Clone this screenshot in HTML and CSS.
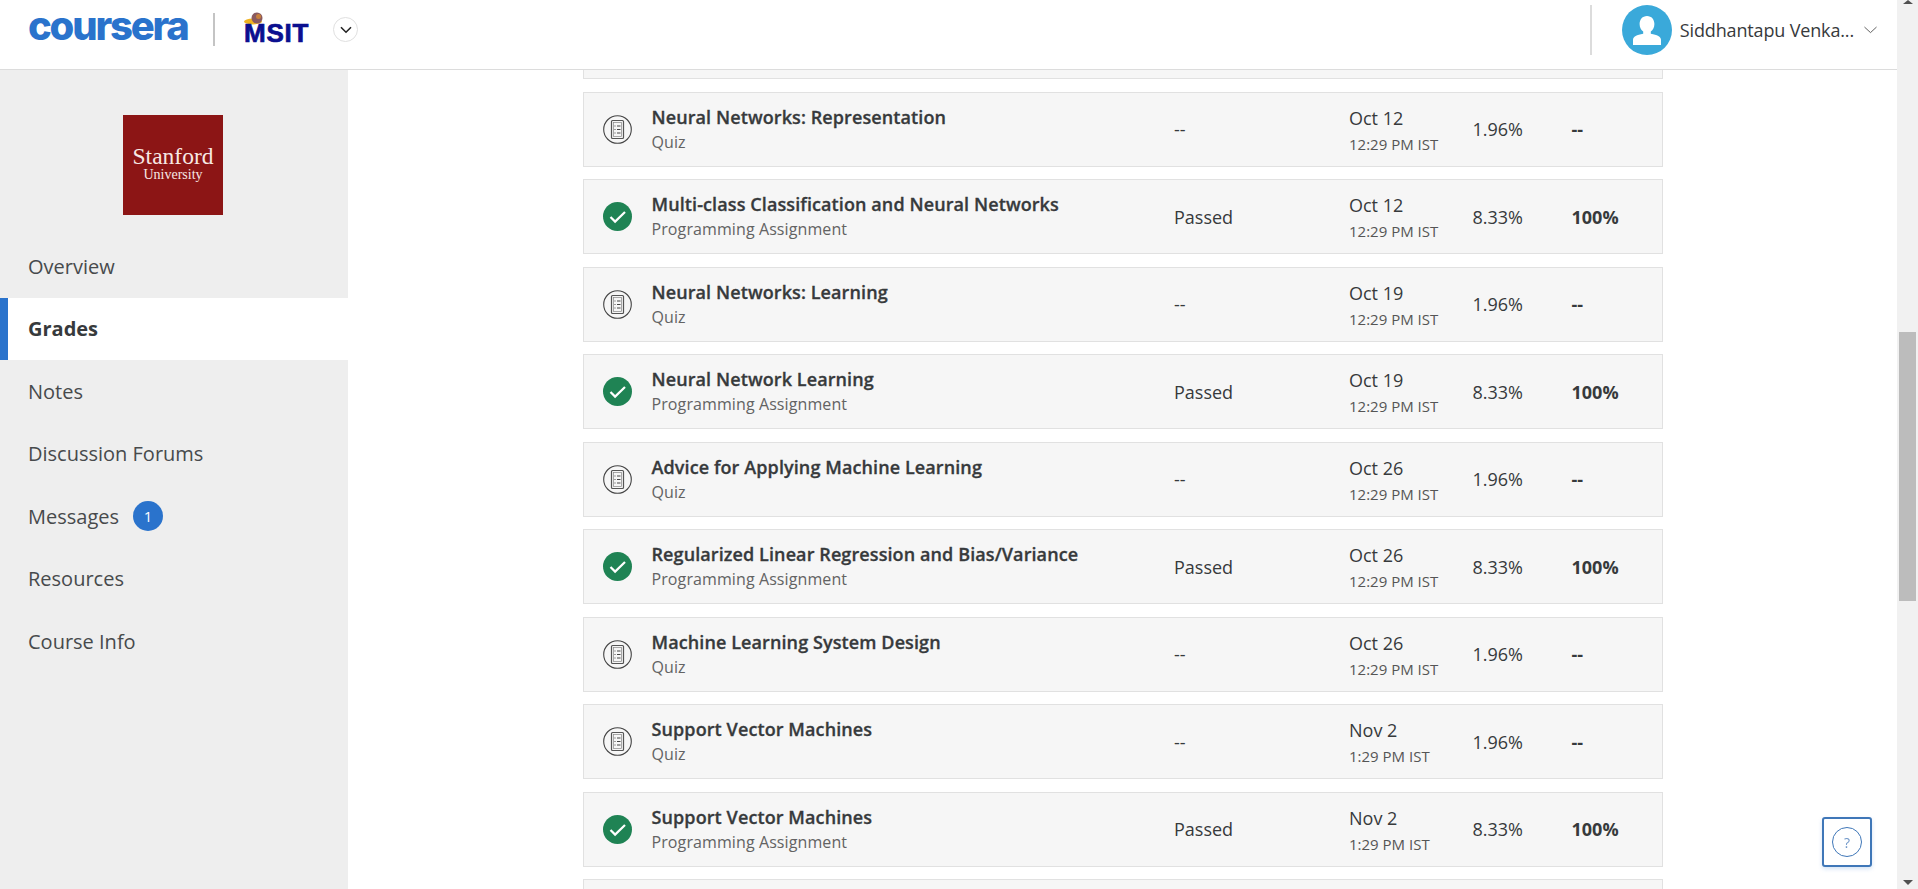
FILE: index.html
```html
<!DOCTYPE html>
<html lang="en">
<head>
  <meta charset="UTF-8" />
  <title>Grades | Coursera</title>
  <link rel="stylesheet" href="styles.css">
</head>
<body>

  <svg class="defs" width="0" height="0">
    <symbol id="quiz" viewBox="0 0 29 29">
      <circle cx="14.5" cy="14.5" r="13.8" fill="none" stroke="#444" stroke-width="1.1"/>
      <rect x="8.500" y="5.500" width="12" height="18" rx="1" fill="none" stroke="#555" stroke-width="1.2"/>
      <rect x="10.500" y="7.500" width="8" height="14" fill="none" stroke="#888" stroke-width="0.7"/>
      <path d="M11.500 11h1M14 11h3.500M11.500 14.500h1M14 14.500h3.500M11.500 18h1M14 18h3.500" fill="none" stroke="#444" stroke-width="1.1"/>
    </symbol>
    <symbol id="passed" viewBox="0 0 29 29">
      <circle cx="14.5" cy="14.5" r="14.5" fill="#1f8354"/>
      <path d="M7.500 15l4.600 4.600L22 10" fill="none" stroke="#fff" stroke-width="2.2"/>
    </symbol>
  </svg>

  <div class="page">
    <header class="topbar">
      <div class="brand">
        <span class="coursera-logo">coursera</span>
        <span class="brand-divider"></span>
        <div class="msit-logo">
          <svg class="msit-sun" width="22" height="13" viewBox="0 0 22 13">
            <ellipse cx="9" cy="9.5" rx="9" ry="3" fill="#f0b323"/>
            <circle cx="13" cy="6" r="5.5" fill="#8a5a5f"/>
            <circle cx="14.5" cy="4.5" r="2.5" fill="#c9803a"/>
          </svg>
          <span class="msit-text">MSIT</span>
        </div>
        <button class="brand-toggle">
          <svg width="12" height="8" viewBox="0 0 12 8"><path d="M1 1.2l5 5 5-5" fill="none" stroke="#222" stroke-width="1.6"/></svg>
        </button>
      </div>
      <div class="account">
        <span class="account-divider"></span>
        <svg class="avatar" width="50" height="50" viewBox="0 0 50 50">
          <circle cx="25" cy="25" r="25" fill="#3aa9da"/>
          <path d="M25 11c-4.600 0-7.400 3.600-7.400 8 0 3.400 1.500 6 3.600 7.600v2.200c-6.400 1-10.200 3-10.200 6.200V40h28v-5c0-3.200-3.800-5.200-10.200-6.200v-2.200c2.100-1.600 3.600-4.200 3.600-7.600 0-4.400-2.800-8-7.400-8z" fill="#fff"/>
        </svg>
        <span class="account-name">Siddhantapu Venka...</span>
        <svg class="account-caret" width="13" height="8" viewBox="0 0 14 8"><path d="M.5.8L7 6.800 13.500.8" fill="none" stroke="#555" stroke-width="1"/></svg>
      </div>
    </header>

    <div class="content">
      <nav class="sidebar">
        <div class="course-logo">
          <span class="stanford">Stanford</span>
          <span class="university">University</span>
        </div>
        <a class="nav-item">Overview</a>
        <a class="nav-item active">Grades</a>
        <a class="nav-item">Notes</a>
        <a class="nav-item">Discussion Forums</a>
        <a class="nav-item">Messages <span class="badge">1</span></a>
        <a class="nav-item">Resources</a>
        <a class="nav-item">Course Info</a>
      </nav>

      <main class="grades">
        <div class="row row-cut"></div>

        <div class="row">
          <div class="item"><svg class="item-icon"><use href="#quiz"/></svg><div class="item-text"><div class="item-title">Neural Networks: Representation</div><div class="item-type">Quiz</div></div></div>
          <div class="status">--</div>
          <div class="due"><div>Oct 12</div><div class="due-time">12:29 PM IST</div></div>
          <div class="weight">1.96%</div>
          <div class="grade">--</div>
        </div>

        <div class="row">
          <div class="item"><svg class="item-icon"><use href="#passed"/></svg><div class="item-text"><div class="item-title">Multi-class Classification and Neural Networks</div><div class="item-type">Programming Assignment</div></div></div>
          <div class="status">Passed</div>
          <div class="due"><div>Oct 12</div><div class="due-time">12:29 PM IST</div></div>
          <div class="weight">8.33%</div>
          <div class="grade">100%</div>
        </div>

        <div class="row">
          <div class="item"><svg class="item-icon"><use href="#quiz"/></svg><div class="item-text"><div class="item-title">Neural Networks: Learning</div><div class="item-type">Quiz</div></div></div>
          <div class="status">--</div>
          <div class="due"><div>Oct 19</div><div class="due-time">12:29 PM IST</div></div>
          <div class="weight">1.96%</div>
          <div class="grade">--</div>
        </div>

        <div class="row">
          <div class="item"><svg class="item-icon"><use href="#passed"/></svg><div class="item-text"><div class="item-title">Neural Network Learning</div><div class="item-type">Programming Assignment</div></div></div>
          <div class="status">Passed</div>
          <div class="due"><div>Oct 19</div><div class="due-time">12:29 PM IST</div></div>
          <div class="weight">8.33%</div>
          <div class="grade">100%</div>
        </div>

        <div class="row">
          <div class="item"><svg class="item-icon"><use href="#quiz"/></svg><div class="item-text"><div class="item-title">Advice for Applying Machine Learning</div><div class="item-type">Quiz</div></div></div>
          <div class="status">--</div>
          <div class="due"><div>Oct 26</div><div class="due-time">12:29 PM IST</div></div>
          <div class="weight">1.96%</div>
          <div class="grade">--</div>
        </div>

        <div class="row">
          <div class="item"><svg class="item-icon"><use href="#passed"/></svg><div class="item-text"><div class="item-title">Regularized Linear Regression and Bias/Variance</div><div class="item-type">Programming Assignment</div></div></div>
          <div class="status">Passed</div>
          <div class="due"><div>Oct 26</div><div class="due-time">12:29 PM IST</div></div>
          <div class="weight">8.33%</div>
          <div class="grade">100%</div>
        </div>

        <div class="row">
          <div class="item"><svg class="item-icon"><use href="#quiz"/></svg><div class="item-text"><div class="item-title">Machine Learning System Design</div><div class="item-type">Quiz</div></div></div>
          <div class="status">--</div>
          <div class="due"><div>Oct 26</div><div class="due-time">12:29 PM IST</div></div>
          <div class="weight">1.96%</div>
          <div class="grade">--</div>
        </div>

        <div class="row">
          <div class="item"><svg class="item-icon"><use href="#quiz"/></svg><div class="item-text"><div class="item-title">Support Vector Machines</div><div class="item-type">Quiz</div></div></div>
          <div class="status">--</div>
          <div class="due"><div>Nov 2</div><div class="due-time">1:29 PM IST</div></div>
          <div class="weight">1.96%</div>
          <div class="grade">--</div>
        </div>

        <div class="row">
          <div class="item"><svg class="item-icon"><use href="#passed"/></svg><div class="item-text"><div class="item-title">Support Vector Machines</div><div class="item-type">Programming Assignment</div></div></div>
          <div class="status">Passed</div>
          <div class="due"><div>Nov 2</div><div class="due-time">1:29 PM IST</div></div>
          <div class="weight">8.33%</div>
          <div class="grade">100%</div>
        </div>

        <div class="row"></div>
      </main>
    </div>
  </div>

  <div class="scrollbar">
    <span class="arrow-up"></span>
    <span class="thumb"></span>
    <span class="arrow-down"></span>
  </div>

  <button class="help-btn"><span class="help-circle">?</span></button>

</body>
</html>
```

FILE: styles.css
```css
body {
  margin: 0;
  height: 889px;
  overflow: hidden;
  display: flex;
  background-color: #fff;
  color: #373a3c;
  font-family: 'Open Sans', sans-serif;
}

.defs {
  position: absolute;
}

.page {
  flex: 1;
  min-width: 0;
  display: flex;
  flex-direction: column;
}

/* top bar */
.topbar {
  height: 59px;
  padding-bottom: 10px;
  flex-shrink: 0;
  display: flex;
  justify-content: space-between;
  align-items: center;
  border-bottom: 1px solid #dcdcdc;
  background-color: #fff;
}

.brand {
  display: flex;
  align-items: center;
  padding-left: 28px;
}

.coursera-logo {
  width: 160px;
  font-family: 'Inter', sans-serif;
  font-size: 40px;
  font-weight: 800;
  line-height: 44px;
  letter-spacing: -2.2px;
  color: #2a73cc;
  margin-top: -8px;
}

.brand-divider {
  width: 2px;
  height: 33px;
  margin: 0 28px 0 25px;
  background-color: #c4c4c4;
}

.msit-logo {
  width: 70px;
  height: 37px;
  display: flex;
  flex-direction: column;
  padding-left: 1px;
  box-sizing: border-box;
}

.msit-sun {
  flex-shrink: 0;
  margin-top: 1px;
}

.msit-text {
  font-family: 'Liberation Sans', sans-serif;
  font-size: 26px;
  font-weight: 700;
  line-height: 20px;
  letter-spacing: 0.8px;
  -webkit-text-stroke: 0.7px #0b0f8f;
  color: #0b0f8f;
  margin: -2px 0 0 0;
}

.brand-toggle {
  width: 25px;
  height: 25px;
  margin-left: 20px;
  padding: 0;
  display: flex;
  align-items: center;
  justify-content: center;
  border: 1px solid #e0e0e0;
  border-radius: 50%;
  background-color: #fff;
}

.account {
  display: flex;
  align-items: center;
  padding-right: 20px;
}

.account-divider {
  width: 2px;
  height: 50px;
  margin-right: 30px;
  background-color: #dcdcdc;
}

.avatar {
  flex-shrink: 0;
}

.account-name {
  margin-left: 8px;
  font-size: 18px;
  line-height: 24px;
  letter-spacing: -0.15px;
}

.account-caret {
  margin-left: 10px;
}

/* sidebar + table */
.content {
  flex: 1;
  min-height: 0;
  display: flex;
}

.sidebar {
  width: 348px;
  flex-shrink: 0;
  background-color: #eee;
}

.course-logo {
  width: 100px;
  height: 96px;
  padding-bottom: 4px;
  margin: 45px 0 20px 123px;
  display: flex;
  flex-direction: column;
  align-items: center;
  justify-content: center;
  background-color: #8c1515;
  color: #f7e8e4;
  font-family: 'Liberation Serif', serif;
}

.stanford {
  font-size: 23.5px;
  line-height: 23px;
}

.university {
  font-size: 14px;
  line-height: 14px;
}

.nav-item {
  height: 62.5px;
  display: flex;
  align-items: center;
  padding-left: 28px;
  font-size: 20px;
  color: #474a4c;
}

.nav-item.active {
  padding-left: 20px;
  border-left: 8px solid #2a73cc;
  background-color: #fff;
  font-weight: 700;
  color: #373a3c;
}

.badge {
  width: 30px;
  height: 30px;
  margin-left: 14px;
  display: flex;
  align-items: center;
  justify-content: center;
  border-radius: 50%;
  background-color: #2a73cc;
  color: #fff;
  font-size: 15px;
}

.grades {
  flex: 1;
  min-width: 0;
  overflow: hidden;
  padding-left: 235px;
}

.row {
  width: 1080px;
  height: 75px;
  box-sizing: border-box;
  margin-bottom: 12.5px;
  display: flex;
  align-items: center;
  border: 1px solid #e1e1e1;
  background-color: #f6f6f6;
  font-size: 18px;
}

.row-cut {
  height: 9.4px;
  border-top: 0;
}

.item {
  width: 590px;
  flex-shrink: 0;
  display: flex;
  align-items: center;
  padding-left: 19px;
  box-sizing: border-box;
}

.item-icon {
  width: 29px;
  height: 29px;
  flex-shrink: 0;
  margin-right: 19.5px;
}

.item-text {
  padding-top: 1px;
}

.item-title {
  font-size: 18px;
  font-weight: 600;
  line-height: 25px;
  letter-spacing: 0.1px;
  -webkit-text-stroke: 0.3px #373a3c;
}

.item-type {
  font-size: 16px;
  line-height: 25px;
  letter-spacing: 0.1px;
  color: #636363;
}

.status {
  width: 175px;
  flex-shrink: 0;
}

.due {
  width: 123.5px;
  flex-shrink: 0;
  line-height: 26px;
  padding-top: 3px;
}

.due-time {
  font-size: 15px;
  color: #555;
}

.weight {
  width: 99px;
  flex-shrink: 0;
}

.grade {
  font-weight: 700;
}

/* browser scrollbar */
.scrollbar {
  width: 21px;
  flex-shrink: 0;
  display: flex;
  flex-direction: column;
  align-items: center;
  background-color: #f1f1f1;
}

.arrow-up {
  width: 0;
  height: 0;
  border: 5px solid transparent;
  border-top: 0;
  border-bottom: 4px solid #505050;
}

.thumb {
  width: 17px;
  height: 269px;
  margin-top: 328px;
  background-color: #bcbcbc;
}

.arrow-down {
  width: 0;
  height: 0;
  margin-top: auto;
  margin-bottom: 4px;
  border: 5px solid transparent;
  border-bottom: 0;
  border-top: 5px solid #505050;
}

.help-btn {
  position: fixed;
  left: 1822px;
  top: 817px;
  width: 50px;
  height: 50px;
  padding: 0;
  display: flex;
  align-items: center;
  justify-content: center;
  border: 2px solid #3f77b8;
  border-radius: 3px;
  background-color: #fff;
  box-shadow: 0 2px 4px rgba(42, 115, 204, 0.2);
}

.help-circle {
  width: 28px;
  height: 28px;
  display: flex;
  align-items: center;
  justify-content: center;
  border: 1px solid #3f77b8;
  border-radius: 50%;
  font-family: 'Open Sans', sans-serif;
  font-size: 14px;
  color: #6f97c9;
}
```
